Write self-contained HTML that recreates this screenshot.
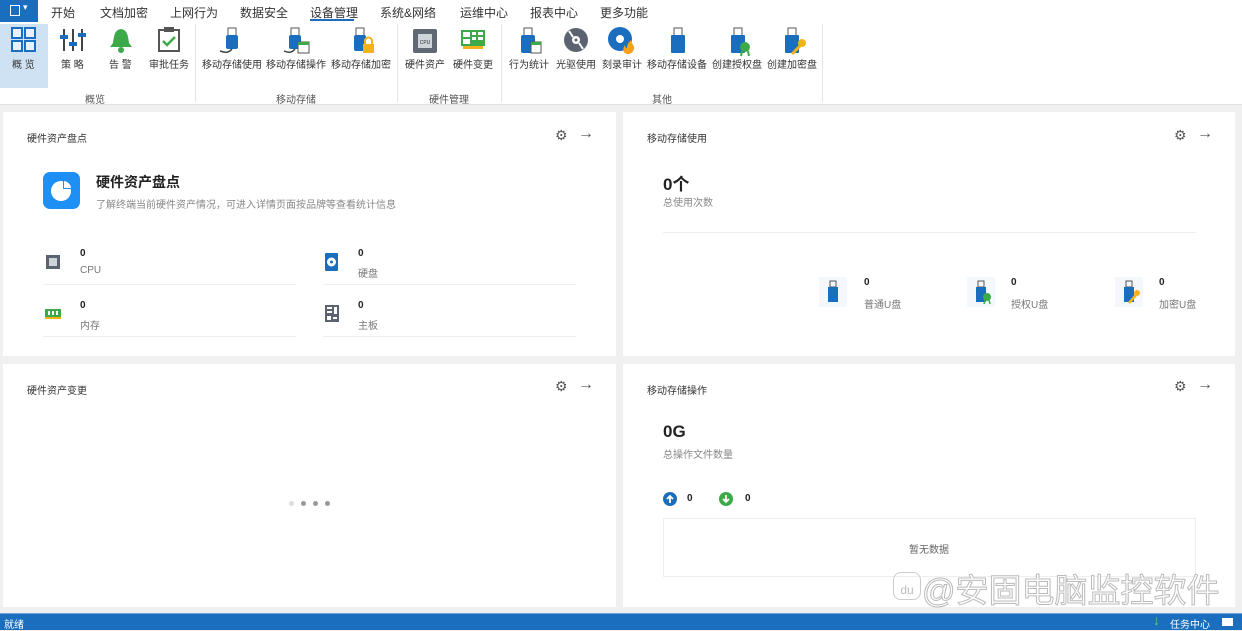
<!DOCTYPE html>
<html><head><meta charset="utf-8"><style>
*{margin:0;padding:0;box-sizing:border-box}
body{width:1242px;height:630px;overflow:hidden;background:#f0f0f0;font-family:"Liberation Sans","Noto Sans CJK SC",sans-serif;color:#333;position:relative}
.a{position:absolute}
.menu{left:0;top:0;width:1242px;height:22px;background:#fff}
.menu span{position:absolute;top:4px;font-size:12px;color:#333}
.ribbon{left:0;top:22px;width:1242px;height:83px;background:#fff;border-bottom:1px solid #e2e2e2}
.btn{position:absolute;top:34px;font-size:10px;color:#333;text-align:center;white-space:nowrap}
.lbl{position:absolute;top:69px;font-size:10px;color:#555;text-align:center}
.sep{position:absolute;top:2px;width:1px;height:78px;background:#e4e4e4}
.panel{background:#fff}
.ttl{position:absolute;left:24px;top:18px;font-size:10px;color:#333}
.ic{position:absolute;top:16px;font-size:14px;color:#555}
.g{font-size:10px;color:#888}
.n{font-size:10px;font-weight:bold;color:#222}
</style></head><body>
<div class="a menu">
<div class="a" style="left:0;top:0;width:38px;height:22px;background:#1a6ebd"><div class="a" style="left:10px;top:5px;width:10px;height:11px;border:1.5px solid #fff"></div><span style="left:23px;top:2px;color:#fff;font-size:9px">▾</span></div>
<span style="left:51px">开始</span><span style="left:100px">文档加密</span><span style="left:170px">上网行为</span><span style="left:240px">数据安全</span><span style="left:310px">设备管理</span><span style="left:380px">系统&amp;网络</span><span style="left:460px">运维中心</span><span style="left:530px">报表中心</span><span style="left:600px">更多功能</span>
<div class="a" style="left:310px;top:19px;width:44px;height:2px;background:#1a6ebd"></div>
</div>
<div class="a ribbon">
<div class="a" style="left:0;top:2px;width:48px;height:64px;background:#cfe2f3"></div>
<svg class="a" style="left:11px;top:5px" width="26" height="26"><g fill="#e8f1fb" stroke="#1a6ebd" stroke-width="2"><rect x="1" y="1" width="10" height="10"/><rect x="14" y="1" width="10" height="10"/><rect x="1" y="14" width="10" height="10"/><rect x="14" y="14" width="10" height="10"/></g></svg>
<div class="btn" style="left:12px">概 览</div>
<svg class="a" style="left:60px;top:5px" width="26" height="26"><g stroke="#444" stroke-width="2"><line x1="4" y1="2" x2="4" y2="24"/><line x1="13" y1="2" x2="13" y2="24"/><line x1="22" y1="2" x2="22" y2="24"/></g><g fill="#1a6ebd"><rect x="0" y="8" width="8" height="4"/><rect x="9" y="15" width="8" height="4"/><rect x="18" y="6" width="8" height="4"/></g></svg>
<div class="btn" style="left:61px">策 略</div>
<svg class="a" style="left:108px;top:5px" width="26" height="26"><path d="M13 2 C6 3 6 10 5 16 L2 20 H24 L21 16 C20 10 20 3 13 2Z" fill="#3daa4a"/><circle cx="13" cy="23" r="3" fill="#3daa4a"/></svg>
<div class="btn" style="left:109px">告 警</div>
<svg class="a" style="left:157px;top:4px" width="24" height="26"><rect x="2" y="4" width="20" height="21" fill="none" stroke="#555" stroke-width="2"/><rect x="7" y="1" width="10" height="5" fill="#555"/><path d="M6 15 l4 4 l8 -8" fill="none" stroke="#3daa4a" stroke-width="2.5"/></svg>
<div class="btn" style="left:149px">审批任务</div>
<div class="lbl" style="left:85px">概览</div>
<div class="sep" style="left:195px"></div>
<svg class="a" style="left:218px;top:5px" width="26" height="28"><rect x="10" y="1" width="8" height="8" fill="none" stroke="#555"/><rect x="8" y="8" width="12" height="14" rx="2" fill="#1a6ebd"/><path d="M14 22 C10 27 5 25 2 24" stroke="#444" fill="none" stroke-width="1.5"/></svg>
<div class="btn" style="left:202px">移动存储使用</div>
<svg class="a" style="left:283px;top:5px" width="28" height="28"><rect x="8" y="1" width="8" height="8" fill="none" stroke="#555"/><rect x="6" y="8" width="12" height="14" rx="2" fill="#1a6ebd"/><path d="M12 22 C8 27 4 25 1 24" stroke="#444" fill="none" stroke-width="1.5"/><rect x="15" y="15" width="11" height="11" fill="#fff" stroke="#555"/><rect x="15" y="15" width="11" height="3" fill="#3daa4a"/></svg>
<div class="btn" style="left:266px">移动存储操作</div>
<svg class="a" style="left:350px;top:5px" width="26" height="28"><rect x="6" y="1" width="8" height="8" fill="none" stroke="#555"/><rect x="4" y="8" width="12" height="16" rx="2" fill="#1a6ebd"/><rect x="13" y="17" width="11" height="9" fill="#f3b21a"/><path d="M15 17 v-3 a3.5 3.5 0 0 1 7 0 v3" fill="none" stroke="#f3b21a" stroke-width="2"/></svg>
<div class="btn" style="left:331px">移动存储加密</div>
<div class="lbl" style="left:276px">移动存储</div>
<div class="sep" style="left:397px"></div>
<svg class="a" style="left:412px;top:6px" width="26" height="26"><rect x="1" y="1" width="24" height="24" rx="2" fill="#606876"/><rect x="6" y="6" width="14" height="14" fill="#cfd3da"/><text x="13" y="16" font-size="5" text-anchor="middle" fill="#333">CPU</text></svg>
<div class="btn" style="left:405px">硬件资产</div>
<svg class="a" style="left:460px;top:7px" width="26" height="22"><rect x="1" y="1" width="24" height="16" fill="#3daa4a"/><g fill="#fff"><rect x="3" y="3" width="7" height="5"/><rect x="12" y="3" width="4" height="3"/><rect x="18" y="3" width="5" height="3"/><rect x="12" y="8" width="4" height="3"/><rect x="18" y="8" width="5" height="3"/><rect x="3" y="10" width="7" height="5"/></g><rect x="3" y="17" width="20" height="3" fill="#f3b21a"/></svg>
<div class="btn" style="left:453px">硬件变更</div>
<div class="lbl" style="left:429px">硬件管理</div>
<div class="sep" style="left:501px"></div>
<svg class="a" style="left:518px;top:5px" width="26" height="28"><rect x="6" y="1" width="8" height="8" fill="none" stroke="#555"/><rect x="3" y="8" width="14" height="18" rx="2" fill="#1a6ebd"/><rect x="13" y="15" width="10" height="11" fill="#fff" stroke="#555"/><rect x="13" y="15" width="10" height="3" fill="#3daa4a"/></svg>
<div class="btn" style="left:509px">行为统计</div>
<svg class="a" style="left:563px;top:5px" width="26" height="26"><circle cx="13" cy="13" r="12" fill="#5c6370"/><circle cx="13" cy="13" r="4" fill="#fff"/><circle cx="13" cy="13" r="1.5" fill="#5c6370"/><path d="M6 4 L10 10 M20 22 L16 16" stroke="#fff" stroke-width="2"/></svg>
<div class="btn" style="left:556px">光驱使用</div>
<svg class="a" style="left:608px;top:5px" width="28" height="28"><circle cx="12" cy="12" r="12" fill="#1a6ebd"/><circle cx="12" cy="12" r="4" fill="#fff"/><path d="M20 27 c-5 0 -6 -5 -3 -9 c0 3 2 3 2 3 c0 -4 2 -6 4 -8 c0 4 4 5 3 9 c-1 4 -4 5 -6 5z" fill="#f3a21a"/></svg>
<div class="btn" style="left:602px">刻录审计</div>
<svg class="a" style="left:668px;top:5px" width="20" height="28"><rect x="6" y="1" width="8" height="8" fill="none" stroke="#555"/><rect x="3" y="8" width="14" height="18" rx="1" fill="#1a6ebd"/></svg>
<div class="btn" style="left:647px">移动存储设备</div>
<svg class="a" style="left:728px;top:5px" width="26" height="30"><rect x="6" y="1" width="8" height="8" fill="none" stroke="#555"/><rect x="3" y="8" width="14" height="18" rx="1" fill="#1a6ebd"/><circle cx="17" cy="20" r="5" fill="#3daa4a"/><path d="M14 24 l-1 5 M20 24 l1 5" stroke="#3daa4a" stroke-width="2"/></svg>
<div class="btn" style="left:712px">创建授权盘</div>
<svg class="a" style="left:782px;top:5px" width="26" height="30"><rect x="6" y="1" width="8" height="8" fill="none" stroke="#555"/><rect x="3" y="8" width="14" height="18" rx="1" fill="#1a6ebd"/><circle cx="20" cy="16" r="4" fill="#f3b21a"/><path d="M18 19 L10 27" stroke="#f3b21a" stroke-width="3"/></svg>
<div class="btn" style="left:767px">创建加密盘</div>
<div class="lbl" style="left:652px">其他</div>
<div class="sep" style="left:822px"></div>
</div>

<div class="a panel" style="left:3px;top:112px;width:613px;height:244px">
<div class="ttl">硬件资产盘点</div>
<div class="ic" style="left:552px;top:15px">⚙</div><div class="ic" style="left:575px;top:13px;font-size:16px">→</div>
<svg class="a" style="left:40px;top:60px" width="37" height="37"><rect width="37" height="37" rx="7" fill="#1e90f5"/><circle cx="18" cy="19" r="10" fill="#fff"/><path d="M20 17 V8 a10 10 0 0 1 9 9z" fill="#1e90f5"/><path d="M21 16 V9 a8 8 0 0 1 7 7z" fill="#fff"/></svg>
<div class="a" style="left:93px;top:60px;font-size:14px;font-weight:bold;color:#222">硬件资产盘点</div>
<div class="a g" style="left:93px;top:84px">了解终端当前硬件资产情况，可进入详情页面按品牌等查看统计信息</div>
<svg class="a" style="left:42px;top:142px" width="16" height="16"><rect x="1" y="1" width="14" height="14" fill="#5c6370"/><rect x="4" y="4" width="8" height="8" fill="#cfd3da"/></svg>
<div class="a n" style="left:77px;top:136px">0</div><div class="a g" style="left:77px;top:153px;color:#777">CPU</div>
<div class="a" style="left:40px;top:172px;width:253px;height:1px;background:#eee"></div>
<svg class="a" style="left:322px;top:141px" width="13" height="18"><rect width="13" height="18" rx="1" fill="#1a6ebd"/><circle cx="6.5" cy="9" r="4.5" fill="#fff"/><circle cx="6.5" cy="9" r="1.5" fill="#1a6ebd"/></svg>
<div class="a n" style="left:355px;top:136px">0</div><div class="a g" style="left:355px;top:153px;color:#777">硬盘</div>
<div class="a" style="left:320px;top:172px;width:253px;height:1px;background:#eee"></div>
<svg class="a" style="left:42px;top:196px" width="16" height="12"><rect y="1" width="16" height="8" fill="#3daa4a"/><g fill="#fff"><rect x="3" y="3" width="2" height="4"/><rect x="7" y="3" width="2" height="4"/><rect x="11" y="3" width="2" height="4"/></g><rect y="9" width="16" height="2" fill="#f3b21a"/></svg>
<div class="a n" style="left:77px;top:188px">0</div><div class="a g" style="left:77px;top:205px;color:#777">内存</div>
<div class="a" style="left:40px;top:224px;width:253px;height:1px;background:#eee"></div>
<svg class="a" style="left:322px;top:193px" width="14" height="17"><rect width="14" height="17" fill="#5c6370"/><g fill="#fff"><rect x="2" y="2" width="5" height="2"/><rect x="2" y="6" width="5" height="2"/><rect x="9" y="2" width="3" height="7"/><rect x="2" y="11" width="4" height="4"/><rect x="8" y="12" width="4" height="2"/></g></svg>
<div class="a n" style="left:355px;top:188px">0</div><div class="a g" style="left:355px;top:205px;color:#777">主板</div>
<div class="a" style="left:320px;top:224px;width:253px;height:1px;background:#eee"></div>
</div>

<div class="a panel" style="left:623px;top:112px;width:612px;height:244px">
<div class="ttl">移动存储使用</div>
<div class="ic" style="left:551px;top:15px">⚙</div><div class="ic" style="left:574px;top:13px;font-size:16px">→</div>
<div class="a" style="left:40px;top:58px;font-size:17px;font-weight:bold;color:#222">0个</div>
<div class="a g" style="left:40px;top:82px">总使用次数</div>
<div class="a" style="left:40px;top:120px;width:533px;height:1px;background:#eee"></div>
<div class="a" style="left:196px;top:165px;width:28px;height:30px;background:#f4f8fc"></div>
<svg class="a" style="left:203px;top:168px" width="14" height="24"><rect x="4" y="1" width="6" height="6" fill="none" stroke="#555"/><rect x="2" y="7" width="10" height="15" fill="#1a6ebd"/></svg>
<div class="a n" style="left:241px;top:165px">0</div><div class="a g" style="left:241px;top:184px;color:#777">普通U盘</div>
<div class="a" style="left:344px;top:165px;width:28px;height:30px;background:#f4f8fc"></div>
<svg class="a" style="left:351px;top:168px" width="20" height="26"><rect x="4" y="1" width="6" height="6" fill="none" stroke="#555"/><rect x="2" y="7" width="10" height="15" fill="#1a6ebd"/><circle cx="13" cy="17" r="4" fill="#3daa4a"/><path d="M11 20 l-1 4 M15 20 l1 4" stroke="#3daa4a" stroke-width="1.5"/></svg>
<div class="a n" style="left:388px;top:165px">0</div><div class="a g" style="left:388px;top:184px;color:#777">授权U盘</div>
<div class="a" style="left:492px;top:165px;width:28px;height:30px;background:#f4f8fc"></div>
<svg class="a" style="left:499px;top:168px" width="20" height="26"><rect x="4" y="1" width="6" height="6" fill="none" stroke="#555"/><rect x="2" y="7" width="10" height="15" fill="#1a6ebd"/><circle cx="15" cy="13" r="3" fill="#f3b21a"/><path d="M14 15 L7 23" stroke="#f3b21a" stroke-width="2.5"/></svg>
<div class="a n" style="left:536px;top:165px">0</div><div class="a g" style="left:536px;top:184px;color:#777">加密U盘</div>
</div>

<div class="a panel" style="left:3px;top:364px;width:613px;height:243px">
<div class="ttl">硬件资产变更</div>
<div class="ic" style="left:552px;top:14px">⚙</div><div class="ic" style="left:575px;top:12px;font-size:16px">→</div>
<div class="a" style="left:286px;top:137px;width:5px;height:5px;border-radius:50%;background:#ddd"></div>
<div class="a" style="left:298px;top:137px;width:5px;height:5px;border-radius:50%;background:#999"></div>
<div class="a" style="left:310px;top:137px;width:5px;height:5px;border-radius:50%;background:#999"></div>
<div class="a" style="left:322px;top:137px;width:5px;height:5px;border-radius:50%;background:#999"></div>
</div>

<div class="a panel" style="left:623px;top:364px;width:612px;height:243px">
<div class="ttl">移动存储操作</div>
<div class="ic" style="left:551px;top:14px">⚙</div><div class="ic" style="left:574px;top:12px;font-size:16px">→</div>
<div class="a" style="left:40px;top:58px;font-size:17px;font-weight:bold;color:#222">0G</div>
<div class="a g" style="left:40px;top:82px">总操作文件数量</div>
<svg class="a" style="left:40px;top:128px" width="14" height="14"><circle cx="7" cy="7" r="7" fill="#1a6ebd"/><path d="M7 11 V4 M4 7 L7 4 L10 7" stroke="#fff" stroke-width="1.8" fill="none"/></svg>
<div class="a n" style="left:64px;top:129px">0</div>
<svg class="a" style="left:96px;top:128px" width="14" height="14"><circle cx="7" cy="7" r="7" fill="#3daa4a"/><path d="M7 3 V10 M4 7 L7 10 L10 7" stroke="#fff" stroke-width="1.8" fill="none"/></svg>
<div class="a n" style="left:122px;top:129px">0</div>
<div class="a" style="left:40px;top:154px;width:533px;height:59px;border:1px solid #eee"></div>
<div class="a" style="left:286px;top:177px;font-size:10px;color:#666">暂无数据</div>
</div>

<div class="a" style="left:922px;top:564px;font-size:33px;color:rgba(255,255,255,0.85);-webkit-text-stroke:1px #bbb;white-space:nowrap">@安固电脑监控软件</div>
<div class="a" style="left:893px;top:572px;width:28px;height:28px;border:1px solid #ccc;border-radius:8px;font-size:12px;color:#bbb;text-align:center;line-height:34px">du</div>

<div class="a" style="left:0;top:614px;width:1242px;height:16px;background:#1a6ebd"></div>
<div class="a" style="left:0;top:613px;width:1242px;height:1px;background:#6fa7dd"></div>
<div class="a" style="left:4px;top:616px;font-size:10px;color:#fff">就绪</div>
<div class="a" style="left:1153px;top:612px;font-size:14px;color:#6c6">↓</div>
<div class="a" style="left:1170px;top:616px;font-size:10px;color:#fff">任务中心</div>
<div class="a" style="left:1222px;top:618px;width:11px;height:8px;background:#fff"></div>
</body></html>
